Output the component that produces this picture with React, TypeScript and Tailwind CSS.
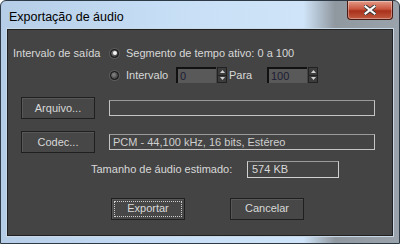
import React from 'react';

function Radio({ checked }: { checked?: boolean }) {
  return (
    <span className="flex h-[9px] w-[9px] items-center justify-center rounded-full border border-[#161616] bg-[radial-gradient(circle_at_40%_40%,#8a8a8a_0%,#4a4a4a_60%,#2a2a2a_100%)] shadow-[0_0_0_1px_#5a5a5a]">
      {checked && <span className="h-[4px] w-[4px] rounded-full bg-[#f4f4f4]" />}
    </span>
  );
}

function Spinner({ value, width }: { value: string; width: string }) {
  return (
    <div className="flex h-[16px] items-stretch">
      <div className={`${width} flex items-center border-l-2 border-t-2 border-[#111] bg-[#595959] pl-[2px] text-[#1d1d33]`}>
        {value}
      </div>
      <div className="ml-[1px] flex w-[10px] flex-col border border-[#222] bg-[#3c3c3c]">
        <div className="flex flex-1 items-center justify-center border-b border-[#222]">
          <svg width="5" height="3" viewBox="0 0 5 3"><path d="M0 3 L2.5 0 L5 3 Z" fill="#cfcfcf" /></svg>
        </div>
        <div className="flex flex-1 items-center justify-center">
          <svg width="5" height="3" viewBox="0 0 5 3"><path d="M0 0 L2.5 3 L5 0 Z" fill="#cfcfcf" /></svg>
        </div>
      </div>
    </div>
  );
}

function Btn({ label, focused }: { label: string; focused?: boolean }) {
  return (
    <div className="flex h-[22px] w-[74px] items-center justify-center border border-[#1f1f1f] bg-[#474747] p-[2px] shadow-[inset_1px_1px_0_#585858]">
      <div className={`flex h-full w-full items-center justify-center ${focused ? 'border border-dotted border-[#cfcfcf]' : ''}`}>
        {label}
      </div>
    </div>
  );
}

export default function App() {
  return (
    <div
      className="flex h-[244px] w-[400px] flex-col overflow-hidden rounded-t-[6px] border border-[#2e3a46] bg-[linear-gradient(90deg,#b5cde6_0%,#c6def5_40%,#cfe4f8_76%,#8f979f_84%,#9aa3ab_100%)] text-[11px]"
      style={{ fontFamily: '"Liberation Sans", Arial, sans-serif' }}
    >
      {/* title bar */}
      <div className="flex h-[28px] shrink-0 items-start justify-between">
        <span className="ml-[8px] mt-[7px] text-[12.5px] text-black">Exportação de áudio</span>
        <div className="mr-[6px] flex h-[19px] w-[46px] items-center justify-center rounded-b-[4px] border border-t-0 border-[#4a1a12] bg-[linear-gradient(180deg,#e39b88_0%,#c8553e_45%,#a9311c_55%,#c05a40_100%)] shadow-[inset_0_0_0_1px_rgba(255,255,255,0.35)]">
          <svg width="12" height="10" viewBox="0 0 12 10">
            <path d="M1 1 L11 9 M11 1 L1 9" stroke="#3a3a3a" strokeWidth="4" strokeLinecap="square" />
            <path d="M1.5 1.5 L10.5 8.5 M10.5 1.5 L1.5 8.5" stroke="#ffffff" strokeWidth="2.2" strokeLinecap="square" />
          </svg>
        </div>
      </div>

      {/* client area */}
      <div className="mx-[6px] mb-[7px] flex flex-1 flex-col border border-[#202020] bg-[#444444] text-[#d8d8d8] shadow-[0_0_0_1px_#c9d8e6]">
        {/* row 1 */}
        <div className="mt-[15px] flex h-[16px] items-center">
          <span className="ml-[5px] w-[97px]">Intervalo de saída</span>
          <Radio checked />
          <span className="ml-[7px]">Segmento de tempo ativo: 0 a 100</span>
        </div>
        {/* row 2 */}
        <div className="mt-[6px] flex h-[16px] items-center">
          <span className="ml-[102px]"><Radio /></span>
          <span className="ml-[7px] w-[50px]">Intervalo</span>
          <Spinner value="0" width="w-[40px]" />
          <span className="ml-[2px] w-[38px]">Para</span>
          <Spinner value="100" width="w-[40px]" />
        </div>
        {/* row 3 */}
        <div className="mt-[14px] flex h-[22px] items-center">
          <div className="ml-[13px]"><Btn label="Arquivo..." /></div>
          <div className="ml-[14px] h-[16px] w-[266px] border border-[#c4c4c4] border-t-[#9a9a9a]" />
        </div>
        {/* row 4 */}
        <div className="mt-[12px] flex h-[22px] items-center">
          <div className="ml-[13px]"><Btn label="Codec..." /></div>
          <div className="ml-[14px] flex h-[16px] w-[266px] items-center border border-[#c4c4c4] border-t-[#9a9a9a] pl-[3px] text-[#cfcfcf]">
            PCM - 44,100 kHz, 16 bits, Estéreo
          </div>
        </div>
        {/* row 5 */}
        <div className="mt-[8px] flex h-[17px] items-center">
          <span className="ml-[83px] w-[156px]">Tamanho de áudio estimado:</span>
          <div className="flex h-[17px] w-[92px] items-center border border-[#d0d0d0] border-t-[#9a9a9a] pl-[4px]">
            574 KB
          </div>
        </div>
        {/* row 6 */}
        <div className="mt-[19px] flex h-[23px] items-center">
          <div className="ml-[103px]"><Btn label="Exportar" focused /></div>
          <div className="ml-[45px]"><Btn label="Cancelar" /></div>
        </div>
      </div>
    </div>
  );
}
